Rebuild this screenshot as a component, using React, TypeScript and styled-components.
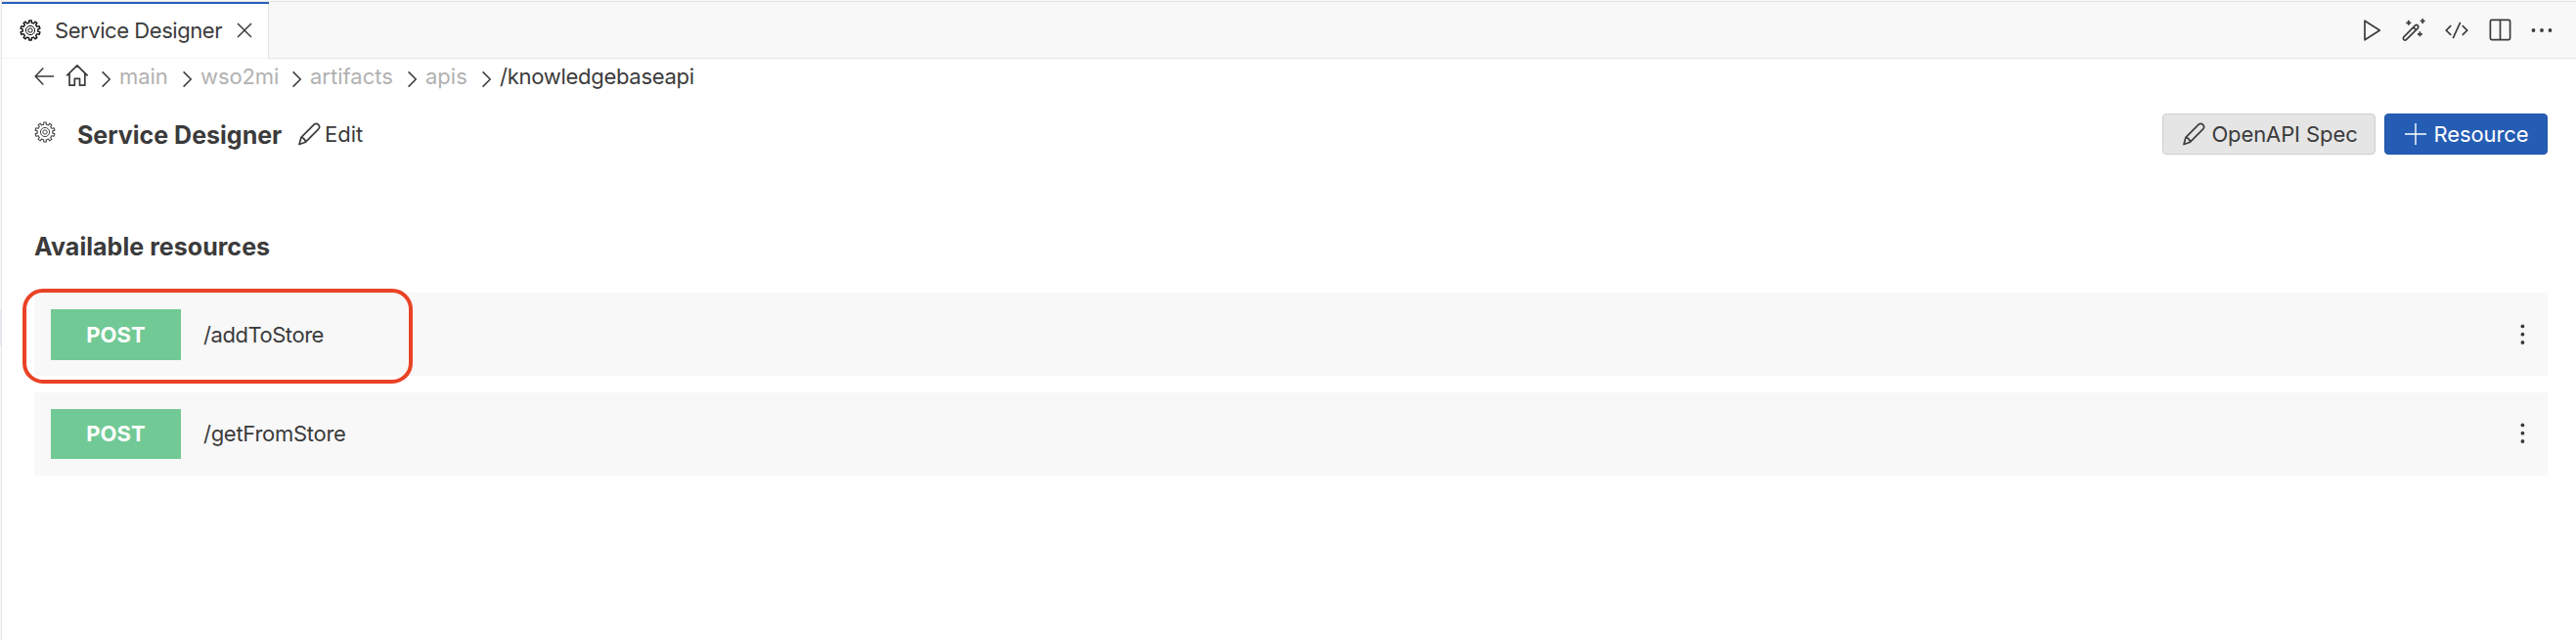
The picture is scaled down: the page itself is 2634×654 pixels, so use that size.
import React from "react";
import styled, { createGlobalStyle } from "styled-components";

const Global = createGlobalStyle`
  *, *::before, *::after { box-sizing: border-box; }
  html, body { margin: 0; padding: 0; background: #fff; }
  body { font-family: Inter, "Liberation Sans", sans-serif; color: #3b3b3b; font-size: 22px; line-height: 28px; overflow: hidden; }
`;

const Window = styled.div`
  display: flex;
  width: 2634px;
  height: 654px;
  background: #fff;
`;
const SideEdge = styled.div`
  width: 2px;
  flex: none;
  background: #f8f8f8;
  border-right: 1px solid #e5e5e5;
  padding-top: 317px;
`;
const SideThumb = styled.div`
  height: 36px;
  background: #e4e6f1;
`;
const Editor = styled.main`
  flex: 1;
  min-width: 0;
`;
const TabBar = styled.header`
  display: flex;
  height: 60px;
  padding-top: 1px;
  background: #f8f8f8;
`;
const Tab = styled.div`
  display: flex;
  align-items: center;
  width: 273px;
  border-top: 3px solid #e5e5e5;
  border-image: linear-gradient(#e5e5e5 0 1px, #2860b8 1px 3px) 3 0 0 0;
  background: #fff;
  box-shadow: inset -1px 0 #e5e5e5, inset 0 -1px #f3f3f3;
  padding: 0 16px 2px 17px;
`;
const TabActions = styled.div`
  flex: 1;
  display: flex;
  align-items: center;
  justify-content: flex-end;
  border-top: 1px solid #e5e5e5;
  border-bottom: 1px solid #e5e5e5;
  padding: 0 23px 0 0;
  gap: 19px;
`;
const Glyph = styled.svg<{ $weight?: number }>`
  display: block;
  flex: none;
  fill: none;
  stroke: currentColor;
  stroke-width: ${(p) => p.$weight ?? 1.7};
`;
const TitleGlyph = styled.div`
  margin-bottom: 5px;
`;
const Label = styled.span<{ $w: number; $ls?: number }>`
  display: block;
  flex: none;
  width: ${(p) => p.$w}px;
  letter-spacing: ${(p) => p.$ls ?? 0}px;
  white-space: nowrap;
`;
const TabLabel = styled(Label)`
  margin-left: 13px;
  margin-right: 15px;
`;
const Breadcrumbs = styled.nav`
  display: flex;
  align-items: center;
  height: 36px;
  padding-left: 32px;
`;
const Crumb = styled(Label)<{ $active?: boolean }>`
  color: ${(p) => (p.$active ? "#3b3b3b" : "#b1b1b1")};
`;
const Separator = styled(Glyph)`
  margin: 5px 8px 0 13px;
`;
const TitleBar = styled.div`
  display: flex;
  align-items: center;
  height: 42px;
  margin: 20px 29px 0 32px;
`;
const Title = styled.h1`
  flex: none;
  width: 211px;
  margin: 2px 14px 0 21px;
  font-size: 25px;
  font-weight: 700;
  white-space: nowrap;
  letter-spacing: 0;
`;
const EditAction = styled.div`
  display: flex;
  align-items: center;
  gap: 4px;
  flex: 1;
`;
const Button = styled.button<{ $primary?: boolean; $w: number }>`
  display: flex;
  align-items: center;
  width: ${(p) => p.$w}px;
  height: 42px;
  margin-left: 9px;
  padding: 0 0 0 19px;
  gap: 6px;
  font: inherit;
  color: ${(p) => (p.$primary ? "#fff" : "#3b3b3b")};
  background: ${(p) => (p.$primary ? "#265db4" : "#e5e5e5")};
  border: 1px solid ${(p) => (p.$primary ? "#2257aa" : "#cecece")};
  border-radius: 4px;
`;
const SectionTitle = styled.h2`
  margin: 80px 0 0 33px;
  height: 61px;
  font-size: 25px;
  line-height: 29px;
  font-weight: 700;
  letter-spacing: 0.05px;
`;
const ResourceList = styled.div`
  display: flex;
  flex-direction: column;
  gap: 17px;
  margin: 0 29px 0 33px;
`;
const ResourceRow = styled.div`
  position: relative;
  display: flex;
  align-items: center;
  height: 85px;
  padding: 0 23px 0 17px;
  background: #f8f8f8;

  &:nth-child(2) {
    padding-bottom: 1px;
  }
`;
const Method = styled.div`
  width: 133px;
  height: 52px;
  margin-right: 23px;
  display: flex;
  align-items: center;
  justify-content: center;
  background: #71c995;
  color: #fff;
  font-weight: 700;

  ${ResourceRow}:nth-child(2) & {
    height: 51px;
  }
`;
const Path = styled(Label)`
  flex: 1;
`;
const Highlight = styled.div`
  position: absolute;
  left: -12px;
  top: -4px;
  width: 399px;
  height: 97px;
  border: 4px solid #ea4226;
  border-radius: 21px;
`;

function gearPath(cx: number, cy: number, outer: number, inner: number, teeth: number) {
  const pts: string[] = [];
  const step = (Math.PI * 2) / teeth;
  for (let i = 0; i < teeth; i++) {
    const a = i * step - Math.PI / 2;
    [[-0.27, inner], [-0.2, outer], [0.2, outer], [0.27, inner]].forEach(([o, r]) => {
      const t = a + o * step;
      pts.push(`${(cx + Math.cos(t) * r).toFixed(2)} ${(cy + Math.sin(t) * r).toFixed(2)}`);
    });
  }
  return `M${pts.join("L")}Z`;
}

const Gear = ({ color, weight }: { color: string; weight: number }) => (
  <Glyph width="24" height="24" viewBox="0 0 24 24" color={color} $weight={weight} strokeLinejoin="round">
    <path d={gearPath(12, 12, 10.1, 7.9, 10)} />
    <circle cx="12" cy="12" r="4.6" strokeWidth="1" />
    <circle cx="12" cy="12" r="2.2" strokeWidth="1" />
  </Glyph>
);
const Pencil = () => (
  <Glyph width="24" height="26" viewBox="0 0 24 26" strokeLinejoin="round">
    <path d="M2 23.5 4 16.3 17.2 3.1Q19.3 1.3 21.5 3.4 23.7 5.6 21.7 7.8L8.5 21.2ZM4 16.3Q7.9 17.2 8.5 21.2" />
  </Glyph>
);
const Chevron = () => (
  <Separator width="11" height="18" viewBox="0 0 11 18" $weight={1.5}>
    <path d="M1.6 1.4 9.2 9 1.6 16.6" />
  </Separator>
);
const Kebab = () => (
  <Glyph width="6" height="26" viewBox="0 0 6 26">
    <g fill="currentColor" stroke="none">
      <circle cx="3.4" cy="4.4" r="1.9" />
      <circle cx="3.4" cy="12.7" r="1.9" />
      <circle cx="3.4" cy="21" r="1.9" />
    </g>
  </Glyph>
);

const crumbs = [
  { text: "main", width: 51, spacing: -0.1 },
  { text: "wso2mi", width: 80, spacing: -0.1 },
  { text: "artifacts", width: 86, spacing: 0 },
  { text: "apis", width: 44, spacing: 0 },
  { text: "/knowledgebaseapi", width: 200, spacing: -0.28 },
];
const resources = [
  { path: "/addToStore", spacing: -0.45, marked: true },
  { path: "/getFromStore", spacing: -0.28, marked: false },
];

export default function App() {
  return (
    <Window>
      <Global />
      <SideEdge><SideThumb /></SideEdge>
      <Editor>
        <TabBar>
          <Tab>
            <Gear color="#111" weight={1.4} />
            <TabLabel $w={171} $ls={-0.44}>Service Designer</TabLabel>
            <Glyph width="16" height="16" viewBox="0 0 16 16" $weight={1.5}><path d="M1 1 15 15M15 1 1 15" /></Glyph>
          </Tab>
          <TabActions>
            <Glyph width="19" height="24" viewBox="0 0 19 24" strokeLinejoin="round"><path d="M2 2.2V21.8L17.3 12Z" /></Glyph>
            <Glyph width="26" height="26" viewBox="-1 0 26 26">
              <path d="M2.8 19.8 14.4 8.2Q16 6.8 17.3 8.1 18.5 9.4 17.2 10.8L5.6 22.4Q4.2 23.8 2.9 22.5 1.6 21.2 2.8 19.8ZM13 10.2 15.2 12.4M7.8 2.8V7.8M5.3 5.3H10.3M22.2 1V6M19.7 3.5H24.7M19.4 14.3V19.3M16.9 16.8H21.9" />
            </Glyph>
            <Glyph width="26" height="20" viewBox="0 0 26 20"><path d="M7.2 5.2 2.3 10 7.2 14.8M18.8 5.2 23.7 10 18.8 14.8M16.7 1.8 9.2 18.2" /></Glyph>
            <Glyph width="24" height="24" viewBox="-0.5 0.5 24 24"><rect x="1.9" y="1.9" width="20.2" height="20.2" rx="1.5" /><path d="M12 2V22" /></Glyph>
            <Glyph width="24" height="6" viewBox="0 0 24 6">
              <g fill="currentColor" stroke="none"><circle cx="3.5" cy="3" r="1.9" /><circle cx="12" cy="3" r="1.9" /><circle cx="20.5" cy="3" r="1.9" /></g>
            </Glyph>
          </TabActions>
        </TabBar>
        <Breadcrumbs>
          <Glyph width="22" height="20" viewBox="0 0 22 20" $weight={1.5}><path d="M10.3 1.6 2.2 10 10.3 18.4M2.2 10H21" /></Glyph>
          <Glyph width="34" height="24" viewBox="-11 1 34 24" strokeLinejoin="round"><path d="M1.2 12.3 11.9 1.9 22.6 12.3M4 10V22.2H9.3V15.3H14.5V22.2H19.8V10" /></Glyph>
          {crumbs.map((c, i) => (
            <React.Fragment key={c.text}>
              <Chevron />
              <Crumb $w={c.width} $ls={c.spacing} $active={i === crumbs.length - 1}>{c.text}</Crumb>
            </React.Fragment>
          ))}
        </Breadcrumbs>
        <TitleBar>
          <TitleGlyph><Gear color="#444" weight={1.1} /></TitleGlyph>
          <Title>Service Designer</Title>
          <EditAction><Pencil /><Label $w={44}>Edit</Label></EditAction>
          <Button $w={218}><Pencil /><Label $w={150} $ls={-0.1}>OpenAPI Spec</Label></Button>
          <Button $primary $w={167}>
            <Glyph width="24" height="24" viewBox="0 0 24 24" $weight={1.4}><path d="M12 1V23M1 12H23" /></Glyph>
            <Label $w={98} $ls={-0.1}>Resource</Label>
          </Button>
        </TitleBar>
        <SectionTitle>Available resources</SectionTitle>
        <ResourceList>
          {resources.map((r) => (
            <ResourceRow key={r.path}>
              <Method>POST</Method>
              <Path $w={160} $ls={r.spacing}>{r.path}</Path>
              <Kebab />
              {r.marked && <Highlight />}
            </ResourceRow>
          ))}
        </ResourceList>
      </Editor>
    </Window>
  );
}
